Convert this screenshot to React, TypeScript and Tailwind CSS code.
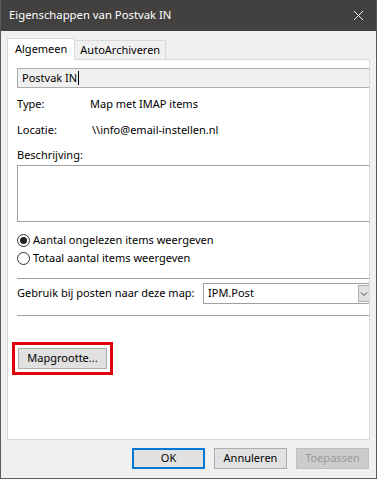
import { X } from "lucide-react"

const font = { fontFamily: '"Noto Sans", "Open Sans", sans-serif' }

function Radio({ checked, label }: { checked?: boolean; label: string }) {
  return (
    <div className="flex h-[18px] items-center gap-[3px]">
      <span className="flex h-[13px] w-[13px] items-center justify-center rounded-full border border-[#333] bg-white">
        {checked && <span className="h-[7px] w-[7px] rounded-full bg-[#222]" />}
      </span>
      <span>{label}</span>
    </div>
  )
}

export default function App() {
  return (
    <div
      className="flex h-[479px] w-[377px] flex-col overflow-hidden whitespace-nowrap border-x border-b border-[#5b5b5b] bg-[#f0f0f0] text-[11px] text-black"
      style={font}
    >
      <div className="flex h-[31px] shrink-0 items-center justify-between bg-[#42413f] pl-[8px] pr-[9px] text-[11.3px] text-white">
        <span>Eigenschappen van Postvak IN</span>
        <X size={17} strokeWidth={1.3} />
      </div>

      <div className="flex flex-1 flex-col px-[6px] pt-[7px]">
        <div className="flex items-end">
          <div className="relative z-10 -mb-px flex h-[22px] items-center border border-b-0 border-[#d9d9d9] bg-white px-[7px]">
            Algemeen
          </div>
          <div className="flex h-[19px] items-center border border-l-0 border-b-0 border-[#d9d9d9] bg-[#f0f0f0] px-[5px]">
            AutoArchiveren
          </div>
        </div>

        <div className="h-[381px] overflow-hidden border border-[#d9d9d9] bg-white pl-[9px]">
          <div className="w-[360px]">
            <div className="mt-[8px] flex h-[20px] items-center border border-[#adadad] bg-[#f0f0f0] px-[4px]">
              Postvak IN<span className="ml-px h-[14px] w-px bg-black" />
            </div>

            <div className="mt-[7px] flex h-[18px] items-center">
              <span className="w-[73px]">Type:</span>
              <span>Map met IMAP items</span>
            </div>
            <div className="mt-[8px] flex h-[18px] items-center">
              <span className="w-[75px]">Locatie:</span>
              <span>\\info@email-instellen.nl</span>
            </div>
            <div className="mt-[7px] flex h-[18px] items-center">Beschrijving:</div>
            <div className="mt-[1px] h-[57px] border border-[#a0a0a0] bg-white" />

            <div className="mt-[9px] flex flex-col">
              <Radio checked label="Aantal ongelezen items weergeven" />
              <Radio label="Totaal aantal items weergeven" />
            </div>

            <div className="mt-[11px] h-px bg-[#a0a0a0]" />
            <div className="mt-[4px] flex h-[21px] items-center">
              <span className="w-[186px]">Gebruik bij posten naar deze map:</span>
              <div className="flex h-[21px] flex-1 items-center justify-between border border-[#a0a0a0] bg-white pl-[4px] pr-[6px]">
                <span>IPM.Post</span>
                <span className="flex h-[17px] w-[12px] items-center justify-center border border-[#adadad] bg-[#e1e1e1]">
                  <svg width="8" height="6" viewBox="0 0 8 6">
                    <path d="M1 1.5 L4 4.5 L7 1.5" fill="none" stroke="#444" strokeWidth="1" />
                  </svg>
                </span>
              </div>
            </div>
            <div className="mt-[11px] h-px bg-[#a0a0a0]" />

            <div className="-ml-[5px] mt-[26px] w-[101px] border-[3px] border-[#e0000b] px-[3px] py-[3px]">
              <div className="flex h-[21px] w-[89px] items-center justify-center border border-[#adadad] bg-[#e1e1e1]">
                Mapgrootte...
              </div>
            </div>
          </div>
        </div>

        <div className="mt-[8px] flex justify-end gap-[9px] pr-[1px]">
          <button className="flex h-[21px] w-[73px] items-center justify-center border-2 border-[#0078d7] bg-[#e1e1e1]">
            OK
          </button>
          <button className="flex h-[21px] w-[73px] items-center justify-center border border-[#adadad] bg-[#e1e1e1]">
            Annuleren
          </button>
          <button className="flex h-[21px] w-[73px] items-center justify-center border border-[#bfbfbf] bg-[#cccccc] text-[#9a9a9a]">
            Toepassen
          </button>
        </div>
      </div>
    </div>
  )
}
